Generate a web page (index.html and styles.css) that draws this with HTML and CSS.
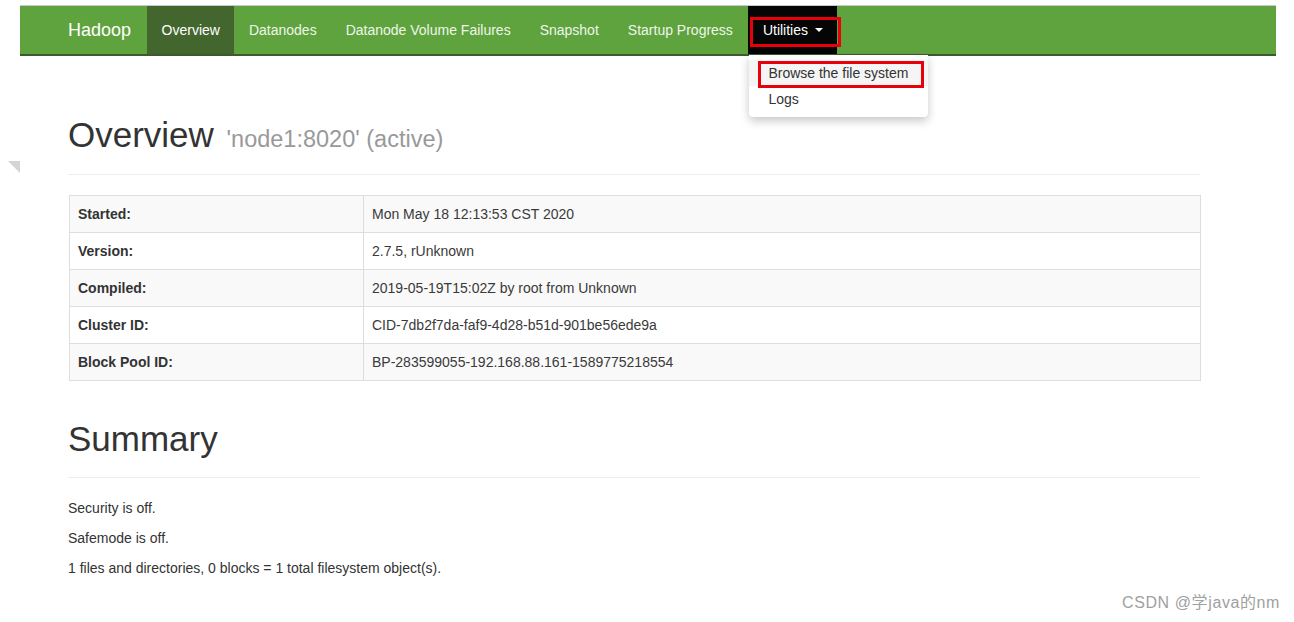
FILE: index.html
```html
<!DOCTYPE html>
<html>
<head>
<meta charset="utf-8">
<link rel="stylesheet" href="styles.css">
</head>
<body>
<div class="page">
  <nav class="navbar">
    <a class="brand">Hadoop</a>
    <ul class="nav">
      <li class="active"><a>Overview</a></li>
      <li><a>Datanodes</a></li>
      <li><a>Datanode Volume Failures</a></li>
      <li><a>Snapshot</a></li>
      <li><a>Startup Progress</a></li>
      <li class="open"><a>Utilities <span class="caret"></span></a>
        <span class="mark mark-util"></span>
        <ul class="dropdown">
          <li class="hover"><a>Browse the file system</a><span class="mark mark-browse"></span></li>
          <li><a>Logs</a></li>
        </ul>
      </li>
    </ul>
  </nav>
  <span class="corner"></span>
  <div class="container">
    <div class="page-header">
      <h1>Overview <small>'node1:8020' (active)</small></h1>
    </div>
    <table class="info">
      <tr><th>Started:</th><td>Mon May 18 12:13:53 CST 2020</td></tr>
      <tr><th>Version:</th><td>2.7.5, rUnknown</td></tr>
      <tr><th>Compiled:</th><td>2019-05-19T15:02Z by root from Unknown</td></tr>
      <tr><th>Cluster ID:</th><td>CID-7db2f7da-faf9-4d28-b51d-901be56ede9a</td></tr>
      <tr><th>Block Pool ID:</th><td>BP-283599055-192.168.88.161-1589775218554</td></tr>
    </table>
    <div class="page-header summary">
      <h1>Summary</h1>
    </div>
    <p>Security is off.</p>
    <p>Safemode is off.</p>
    <p>1 files and directories, 0 blocks = 1 total filesystem object(s).</p>
  </div>
  <div class="watermark">CSDN @学java的nm</div>
</div>
</body>
</html>
```

FILE: styles.css
```css
* { box-sizing: border-box; }
html, body { margin: 0; padding: 0; background: #fff; }
body {
  font-family: "Liberation Sans", Arial, "Noto Sans CJK SC", sans-serif;
  font-size: 14px;
  line-height: 20px;
  color: #333;
}
.page { position: relative; width: 1294px; height: 622px; padding-top: 5px; overflow: hidden; }

.navbar {
  margin: 0 18px 0 20px;
  height: 51px;
  background: #5fa33e;
  border-top: 1px solid #c8c8c8;
  border-bottom: 2px solid #3d5a2e;
  display: flex;
  align-items: stretch;
  padding-left: 33px;
}
.brand {
  color: #fff;
  font-size: 18px;
  padding: 0 15px;
  line-height: 48px;
  margin-right: 1px;
}
.nav { list-style: none; margin: 0; padding: 0; display: flex; }
.nav > li { position: relative; }
.nav > li > a {
  display: block;
  padding: 0 14.5px;
  line-height: 48px;
  color: #eef5ea;
  white-space: nowrap;
}
.nav > li.active > a { background: #43662f; color: #fff; }
.nav > li.open { margin-left: 1px; }
.nav > li.open > a { background: #050505; color: #fff; }
.caret {
  display: inline-block;
  width: 0; height: 0;
  border-top: 4px solid #fff;
  border-left: 4px solid transparent;
  border-right: 4px solid transparent;
  vertical-align: middle;
  margin-left: 3px;
  margin-top: -2px;
}
.dropdown {
  position: absolute;
  top: 49px;
  left: 1px;
  width: 179px;
  list-style: none;
  margin: 0;
  padding: 5px 0;
  background: #fff;
  border-radius: 0 0 4px 4px;
  box-shadow: 0 4px 10px rgba(0,0,0,0.22);
}
.dropdown li { position: relative; }
.dropdown a {
  display: block;
  padding: 3px 20px 3px 19px;
  line-height: 20px;
  color: #333;
  white-space: nowrap;
}
.dropdown li.hover a { background: #f5f5f5; }
.mark { position: absolute; border: 3px solid #e8000b; pointer-events: none; }
.mark-util { left: 2px; top: 11px; width: 91px; height: 30px; }
.mark-browse { left: 9px; top: 1px; width: 166px; height: 27px; }

.corner {
  position: absolute;
  left: 8px; top: 161px;
  width: 0; height: 0;
  border-top: 12px solid #d4d4d4;
  border-left: 12px solid transparent;
}

.container { width: 1132px; margin-left: 68px; }
.page-header {
  margin-top: 60px;
  padding-bottom: 16px;
  border-bottom: 1px solid #eee;
  margin-bottom: 20px;
}
h1 {
  font-size: 35px;
  font-weight: 500;
  line-height: 38px;
  margin: 0;
  color: #333;
}
h1 small { font-size: 23.5px; color: #999; font-weight: 400; margin-left: 3px; }
.summary { margin-top: 39px; padding-bottom: 19px; margin-bottom: 20px; }

.info {
  width: 1132px;
  border-collapse: collapse;
  border: 1px solid #ddd;
  margin-left: 1px;
}
.info th, .info td {
  border: 1px solid #ddd;
  padding: 8px;
  text-align: left;
  line-height: 20px;
  vertical-align: top;
}
.info th { width: 294px; font-weight: bold; color: #333; }
.info td { color: #3a3a3a; }
.info tr:nth-child(odd) { background: #f9f9f9; }

p { margin: 0 0 10px; }

.watermark {
  position: absolute;
  left: 1122px; top: 593px;
  font-size: 16px;
  letter-spacing: 0.6px;
  color: #a0a0a0;
  line-height: 20px;
}
```
